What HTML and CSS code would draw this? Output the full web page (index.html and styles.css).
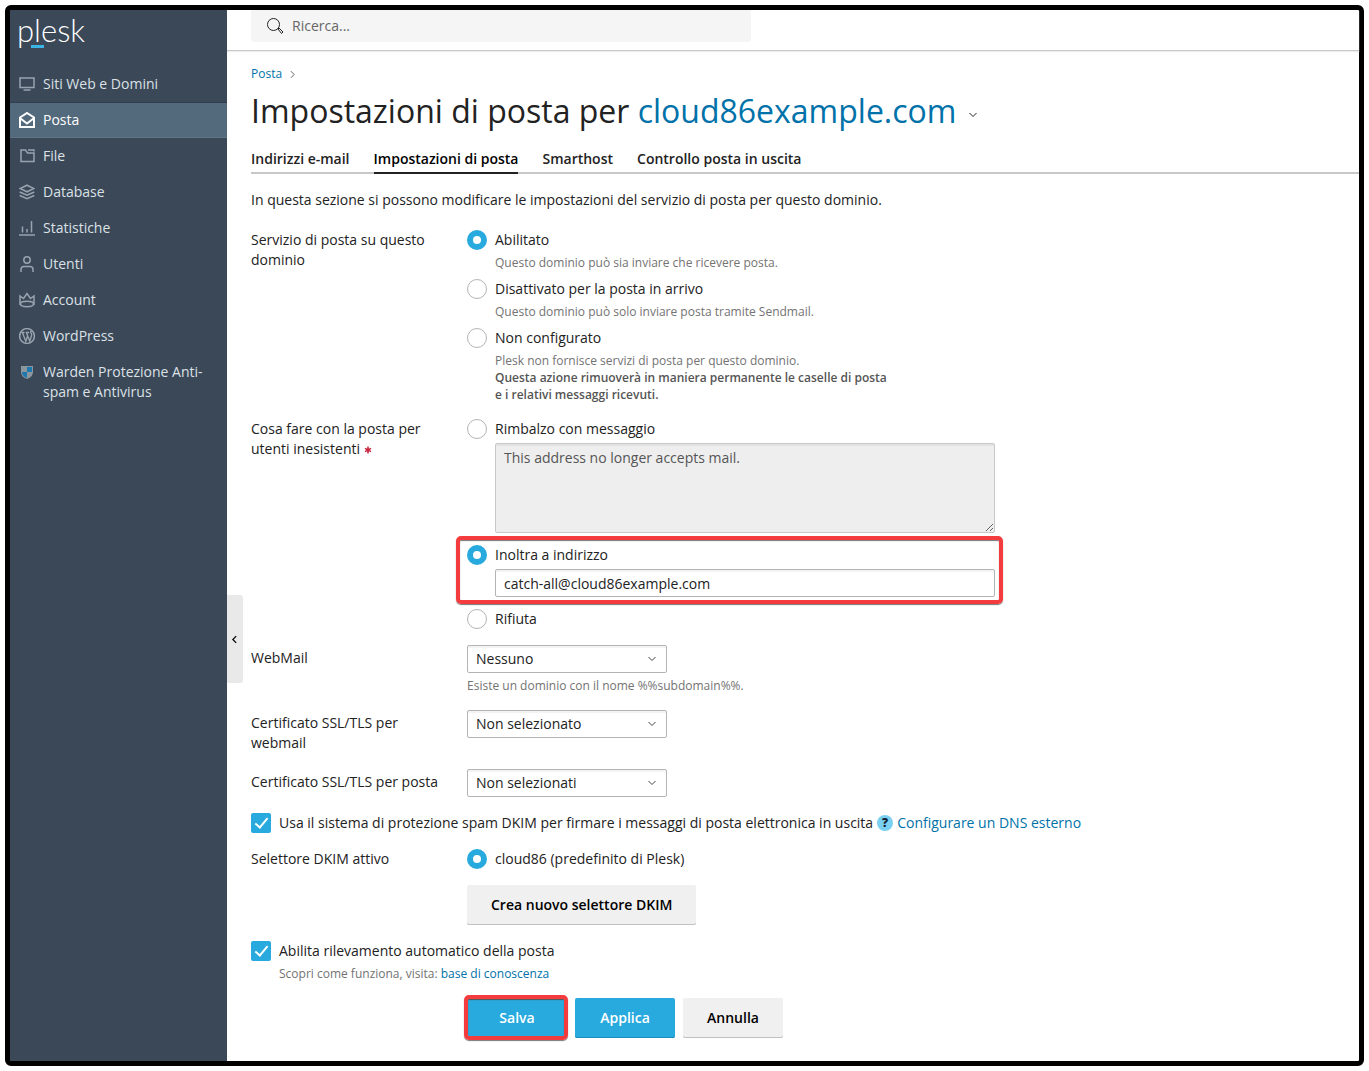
FILE: index.html
```html
<!DOCTYPE html>
<html lang="it">
<head>
<meta charset="utf-8">
<meta name="viewport" content="width=device-width, initial-scale=1">
<title>Impostazioni di posta - Plesk</title>
<link rel="stylesheet" href="styles.css">
</head>
<body>
<div class="frame">
  <aside class="sidebar">
    <a class="logo" href="#">p<span class="logo-mark">l</span>esk</a>
    <nav class="menu">
      <a class="menu-item" href="#">
        <svg class="icon" viewBox="0 0 16 16"><path d="M1 2h14v9.500H1zM4.500 14h7"/></svg>
        <span>Siti Web e Domini</span>
      </a>
      <a class="menu-item menu-item--active" href="#">
        <svg class="icon" viewBox="0 0 16 16"><path d="M1 5.500 8 1l7 4.500V15H1zM1.500 6.500 8 11.500l6.500-5" stroke-width="2"/></svg>
        <span>Posta</span>
      </a>
      <a class="menu-item" href="#">
        <svg class="icon" viewBox="0 0 16 16"><path d="M2 2h4.500l2 3H15v8.500H2zM9 2h6v1.500" /></svg>
        <span>File</span>
      </a>
      <a class="menu-item" href="#">
        <svg class="icon" viewBox="0 0 16 16"><path d="M8 1.200 15 4.500 8 7.800 1 4.500zM.7 8 8 11.300 15.300 8M.7 11.500 8 14.800l7.300-3.300"/></svg>
        <span>Database</span>
      </a>
      <a class="menu-item" href="#">
        <svg class="icon" viewBox="0 0 16 16"><path d="M0 15h16M3.500 12.500V6.500M8 12.500V9M12.500 12.500V1"/></svg>
        <span>Statistiche</span>
      </a>
      <a class="menu-item" href="#">
        <svg class="icon" viewBox="0 0 16 16"><circle cx="8" cy="4" r="3.200"/><path d="M2 16v-2.500Q2 10.500 5 10.500h6q3 0 3 3V16"/></svg>
        <span>Utenti</span>
      </a>
      <a class="menu-item" href="#">
        <svg class="icon" viewBox="0 0 16 16"><path d="M1 13V4l3.500 2.500L8 1.500l3.500 5L15 4v9"/><ellipse cx="8" cy="12" rx="6.500" ry="2.700"/></svg>
        <span>Account</span>
      </a>
      <a class="menu-item" href="#">
        <svg class="icon" viewBox="0 0 16 16"><circle cx="8" cy="8" r="7.400"/><path d="M2.300 4.500h3.200M3.500 4.700l3.300 8.500L8.600 8M6.700 4.500h3.500M7.500 4.700l3.200 8.500 1.800-5.500q.6-2-.7-3.200-.3-1.500 1-1.500" stroke-width="1.400"/></svg>
        <span>WordPress</span>
      </a>
      <a class="menu-item" href="#">
        <svg class="icon icon--shield" viewBox="0 0 16 16"><path fill="#8b969f" d="M2 2h12v6q0 5-6 7-6-2-6-7z"/><path fill="#1c78ad" d="M8 3h5v5H8zM3 8h5v6Q3 12 3 8z"/></svg>
        <span>Warden Protezione Anti-spam e Antivirus</span>
      </a>
    </nav>
    <button class="collapse" type="button" aria-label="Comprimi menu">
      <svg viewBox="0 0 6 10"><path d="M5 1 1 5l4 4"/></svg>
    </button>
  </aside>

  <main class="main">
    <header class="topbar">
      <label class="search">
        <svg viewBox="0 0 16 16"><circle cx="6.500" cy="6.500" r="6"/><path d="m11 11 1-1 4 4-1.500 1.500z"/></svg>
        <input type="search" placeholder="Ricerca..." aria-label="Ricerca">
      </label>
    </header>

    <div class="content">
      <nav class="breadcrumb">
        <a href="#">Posta</a>
        <svg viewBox="0 0 6 10"><path d="m1 1 4 4-4 4"/></svg>
      </nav>
      <h1 class="title">
        <span>Impostazioni di posta per <a href="#">cloud86example.com</a></span>
        <svg viewBox="0 0 8 6"><path d="m.5 1 3.500 3.500L7.500 1"/></svg>
      </h1>
      <nav class="tabs">
        <a class="tab" href="#">Indirizzi e-mail</a>
        <a class="tab tab--active" href="#">Impostazioni di posta</a>
        <a class="tab" href="#">Smarthost</a>
        <a class="tab" href="#">Controllo posta in uscita</a>
      </nav>
      <p class="intro">In questa sezione si possono modificare le impostazioni del servizio di posta per questo dominio.</p>

      <form class="form">
        <div class="row" role="radiogroup" aria-labelledby="service-label">
          <span class="label" id="service-label">Servizio di posta su questo dominio</span>
          <div class="options">
            <div class="option">
              <label class="choice"><input type="radio" name="service" checked>Abilitato</label>
              <p class="hint">Questo dominio può sia inviare che ricevere posta.</p>
            </div>
            <div class="option">
              <label class="choice"><input type="radio" name="service">Disattivato per la posta in arrivo</label>
              <p class="hint">Questo dominio può solo inviare posta tramite Sendmail.</p>
            </div>
            <div class="option">
              <label class="choice"><input type="radio" name="service">Non configurato</label>
              <p class="hint">Plesk non fornisce servizi di posta per questo dominio.<br><strong>Questa azione rimuoverà in maniera permanente le caselle di posta<br>e i relativi messaggi ricevuti.</strong></p>
            </div>
          </div>
        </div>

        <div class="row" role="radiogroup" aria-labelledby="bounce-label">
          <span class="label" id="bounce-label">Cosa fare con la posta per utenti inesistenti <svg class="required" viewBox="0 0 8 8"><path d="M4 .5v7M1 2.300l6 3.400M7 2.300 1 5.700"/></svg></span>
          <div class="options options--loose">
            <div class="option">
              <label class="choice"><input type="radio" name="bounce">Rimbalzo con messaggio</label>
              <textarea class="control" aria-label="Messaggio" disabled>This address no longer accepts mail.</textarea>
            </div>
            <div class="option option--marked">
              <label class="choice"><input type="radio" name="bounce" checked>Inoltra a indirizzo</label>
              <input class="control" type="text" aria-label="Indirizzo" value="catch-all@cloud86example.com">
            </div>
            <div class="option">
              <label class="choice"><input type="radio" name="bounce">Rifiuta</label>
            </div>
          </div>
        </div>

        <div class="row">
          <label class="label label--control" for="webmail">WebMail</label>
          <div class="field">
            <div class="select">
              <select class="control" id="webmail"><option>Nessuno</option></select>
              <svg viewBox="0 0 8 6"><path d="m.5 1 3.500 3.500L7.500 1"/></svg>
            </div>
            <p class="hint">Esiste un dominio con il nome %%subdomain%%.</p>
          </div>
        </div>

        <div class="row">
          <label class="label label--control" for="cert-webmail">Certificato SSL/TLS per webmail</label>
          <div class="select">
            <select class="control" id="cert-webmail"><option>Non selezionato</option></select>
            <svg viewBox="0 0 8 6"><path d="m.5 1 3.500 3.500L7.500 1"/></svg>
          </div>
        </div>

        <div class="row">
          <label class="label label--control" for="cert-mail">Certificato SSL/TLS per posta</label>
          <div class="select">
            <select class="control" id="cert-mail"><option>Non selezionati</option></select>
            <svg viewBox="0 0 8 6"><path d="m.5 1 3.500 3.500L7.500 1"/></svg>
          </div>
        </div>

        <div class="inline">
          <label class="choice"><input type="checkbox" checked>Usa il sistema di protezione spam DKIM per firmare i messaggi di posta elettronica in uscita</label>
          <span class="help">?</span>
          <a href="#">Configurare un DNS esterno</a>
        </div>

        <div class="row">
          <span class="label">Selettore DKIM attivo</span>
          <label class="choice"><input type="radio" name="selector" checked>cloud86 (predefinito di Plesk)</label>
        </div>

        <div class="actions">
          <button class="button" type="button">Crea nuovo selettore DKIM</button>
        </div>

        <div class="option">
          <label class="choice"><input type="checkbox" checked>Abilita rilevamento automatico della posta</label>
          <p class="hint">Scopri come funziona, visita: <a href="#">base di conoscenza</a></p>
        </div>

        <div class="actions">
          <button class="button button--primary button--marked" type="submit">Salva</button>
          <button class="button button--primary" type="button">Applica</button>
          <button class="button" type="button">Annulla</button>
        </div>
      </form>
    </div>
  </main>
</div>
</body>
</html>
```

FILE: styles.css
```css
*, *::before, *::after { box-sizing: border-box; }

body {
  margin: 0;
  padding: 5px;
  background: #fff;
  color: #222;
  font: 14px/20px "Open Sans", "Noto Sans", sans-serif;
}

a { color: #0072a9; text-decoration: none; }
p, h1 { margin: 0; }
input, select, textarea, button { font: inherit; margin: 0; }
svg { fill: none; stroke: currentColor; flex: none; }

.frame {
  display: flex;
  min-height: calc(100vh - 10px);
  border: 5px solid #000;
  border-radius: 6px;
}

/* Sidebar */
.sidebar {
  position: relative;
  flex: none;
  width: 217px;
  background: #3a4858;
}

.logo {
  display: block;
  height: 56px;
  padding: 3px 7px;
  color: #fff;
  font: 300 31px/34px Lato, sans-serif;
}

.logo-mark {
  display: inline-block;
  position: relative;
}

.logo-mark::after {
  content: "";
  position: absolute;
  left: -3px;
  bottom: -1px;
  width: 13px;
  height: 3px;
  background: #3cb4e5;
}

.menu-item {
  display: flex;
  gap: 8px;
  padding: 8px 16px 8px 9px;
  color: #dce1e6;
}

.menu-item--active {
  padding-block: 7px;
  border-top: 1px solid #303e50;
  border-bottom: 1px solid #5f7487;
  background: #53697c;
  color: #fff;
}

.icon {
  width: 16px;
  height: 16px;
  margin-top: 2px;
  color: #98a3ae;
  stroke-width: 1.5;
}

.menu-item--active .icon { color: #fff; }
.icon--shield { stroke: none; }

.collapse {
  position: absolute;
  left: 100%;
  top: 585px;
  display: grid;
  place-items: center;
  width: 16px;
  height: 88px;
  padding: 0 2px 0 0;
  border: 0;
  border-radius: 0 3px 3px 0;
  background: #e9e9e9;
  color: #000;
}

.collapse svg { width: 5px; height: 9px; stroke-width: 1.5; }

/* Top bar */
.main { flex: 1; min-width: 0; }

.topbar {
  padding: 0 24px 8px;
  border-bottom: 1px solid #c8c8c8;
  box-shadow: 0 1px 1px #eee;
}

.search {
  display: flex;
  align-items: center;
  gap: 9px;
  max-width: 500px;
  height: 32px;
  padding: 0 16px;
  border-radius: 0 0 3px 3px;
  background: #f5f5f5;
}

.search svg { width: 16px; height: 16px; color: #222; }

.search input {
  flex: 1;
  min-width: 0;
  padding: 0;
  border: 0;
  outline: 0;
  background: none;
}

.search input::placeholder { color: #666; opacity: 1; }

/* Page heading */
.content { padding: 15px 0 23px 24px; }

.breadcrumb {
  display: flex;
  align-items: center;
  gap: 8px;
  font-size: 12px;
  line-height: 16px;
}

.breadcrumb svg { width: 5px; height: 9px; color: #444; }

.title {
  display: flex;
  align-items: center;
  gap: 13px;
  margin-top: 9px;
  font-size: 32px;
  font-weight: 400;
  line-height: 40px;
}

.title svg { width: 8px; height: 6px; margin-top: 7px; }

.tabs {
  display: flex;
  gap: 24px;
  height: 43px;
  padding-top: 18px;
  border-bottom: 2px solid #c8c8c8;
}

.tab { height: 25px; color: #222; font-weight: 600; }
.tab--active { border-bottom: 2px solid #222; color: #000; }

.intro { margin: 16px 0 20px; }

/* Form */
.form {
  display: flex;
  flex-direction: column;
  gap: 16px;
}

.row {
  display: grid;
  grid-template-columns: 192px minmax(0, 1fr);
  column-gap: 24px;
}

.label--control { padding-top: 3px; }

.options { display: flex; flex-direction: column; gap: 8px; max-width: 528px; }
.options--loose { gap: 12px; }

.choice { display: flex; gap: 8px; }

.hint {
  margin: 4px 0 0;
  color: #737373;
  font-size: 12px;
  line-height: 17px;
}

.option .hint { margin-left: 28px; }
.hint strong { color: #555; font-weight: 600; }

.required { width: 8px; height: 8px; color: #c8203c; stroke-width: 1.5; }

input[type="radio"], input[type="checkbox"] {
  appearance: none;
  flex: none;
  width: 20px;
  height: 20px;
  border: 1px solid #b4b4b4;
  background: #fff;
}

input[type="radio"] { border-radius: 50%; }
input[type="radio"]:checked { border: 6px solid #28aade; }

input[type="checkbox"] {
  display: grid;
  place-items: center;
  border-radius: 2px;
}

input[type="checkbox"]:checked { border: 0; background: #28aade; }

input[type="checkbox"]:checked::before {
  content: "";
  width: 7px;
  height: 13px;
  margin-top: -4px;
  border: solid #fff;
  border-width: 0 2px 2px 0;
  transform: rotate(40deg);
}

.control {
  display: block;
  width: 100%;
  height: 28px;
  padding: 0 8px;
  border: 1px solid #b4b4b4;
  border-radius: 2px;
  background: #fff;
  box-shadow: inset 0 2px #f3f3f3;
  color: #222;
}

.option .control { width: calc(100% - 28px); margin: 4px 0 0 28px; }

textarea.control {
  height: 90px;
  padding: 4px 8px;
  border-color: #c8c8c8;
  background: #eee;
  box-shadow: inset 0 2px #e2e2e2;
  color: #555;
}

.option--marked { position: relative; }

.option--marked::after {
  content: "";
  position: absolute;
  inset: -9px -8px -7px -11px;
  border: 4px solid #f43b3d;
  border-radius: 5px;
  box-shadow: 0 1px 1px #777, inset 0 1px 1px #777;
  pointer-events: none;
}

.select { display: grid; width: 200px; align-items: center; align-self: start; }
.select > * { grid-area: 1 / 1; }
.select select { appearance: none; }

.select svg {
  justify-self: end;
  width: 8px;
  height: 6px;
  margin-right: 11px;
  color: #444;
  pointer-events: none;
}

.inline { display: flex; gap: 4px; }

.help {
  width: 16px;
  height: 16px;
  margin-top: 2px;
  border-radius: 50%;
  background: #7ad0f0;
  color: #123;
  font-size: 12px;
  font-weight: 800;
  line-height: 16px;
  text-align: center;
}

.actions { display: flex; gap: 8px; padding-left: 216px; }

.button {
  min-width: 100px;
  height: 40px;
  padding: 0 24px;
  border: 0;
  border-radius: 2px;
  background: #f0f0f0;
  box-shadow: inset 0 -1px #c0c0c0;
  color: #000;
  font-weight: 600;
}

.button--primary {
  background: #28aade;
  box-shadow: inset 0 -1px #1c8dbb;
  color: #fff;
}

.button--marked { position: relative; }

.button--marked::after {
  content: "";
  position: absolute;
  inset: -3px -1px -2px -3px;
  border: 4px solid #f43b3d;
  border-radius: 5px;
  box-shadow: 0 1px 1px #777, inset 0 1px 1px #555;
}
```
